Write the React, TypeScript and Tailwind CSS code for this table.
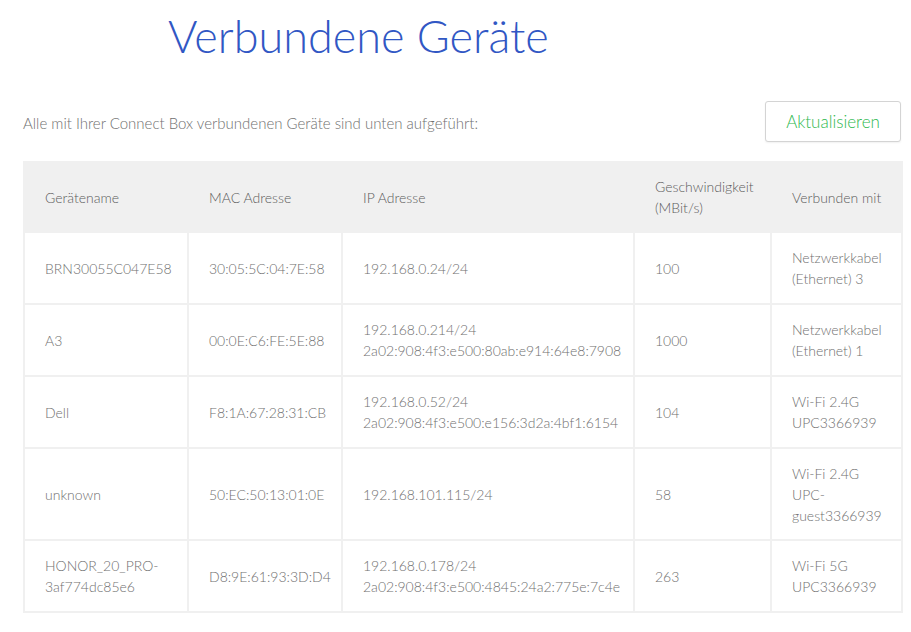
import React from "react";

const rows: { name: string[]; mac: string; ip: string[]; speed: string; via: string[] }[] = [
  { name: ["BRN30055C047E58"], mac: "30:05:5C:04:7E:58", ip: ["192.168.0.24/24"], speed: "100", via: ["Netzwerkkabel", "(Ethernet) 3"] },
  {
    name: ["A3"],
    mac: "00:0E:C6:FE:5E:88",
    ip: ["192.168.0.214/24", "2a02:908:4f3:e500:80ab:e914:64e8:7908"],
    speed: "1000",
    via: ["Netzwerkkabel", "(Ethernet) 1"],
  },
  {
    name: ["Dell"],
    mac: "F8:1A:67:28:31:CB",
    ip: ["192.168.0.52/24", "2a02:908:4f3:e500:e156:3d2a:4bf1:6154"],
    speed: "104",
    via: ["Wi-Fi 2.4G", "UPC3366939"],
  },
  { name: ["unknown"], mac: "50:EC:50:13:01:0E", ip: ["192.168.101.115/24"], speed: "58", via: ["Wi-Fi 2.4G", "UPC-", "guest3366939"] },
  {
    name: ["HONOR_20_PRO-", "3af774dc85e6"],
    mac: "D8:9E:61:93:3D:D4",
    ip: ["192.168.0.178/24", "2a02:908:4f3:e500:4845:24a2:775e:7c4e"],
    speed: "263",
    via: ["Wi-Fi 5G", "UPC3366939"],
  },
];

function Lines({ items }: { items: string[] }) {
  return (
    <>
      {items.map((t) => (
        <div key={t}>{t}</div>
      ))}
    </>
  );
}

export default function App() {
  const td = "bg-white pl-[20px] pr-2 py-[13.5px] align-middle";
  const th = "pl-[20px] font-light";
  return (
    <div className="min-h-screen bg-white font-['Lato',sans-serif] font-light text-[14px] leading-[21px] text-[#707070]">
      <h1 className="pl-[168px] pt-[9px] text-[45px] leading-[55px] font-light text-[#3157c4]">Verbundene Geräte</h1>

      <div className="mt-[37px] flex items-center justify-between pl-[23px] pr-[10px]">
        <p className="text-[15px] pt-[4px]">Alle mit Ihrer Connect Box verbundenen Geräte sind unten aufgeführt:</p>
        <button className="h-[41px] w-[136px] rounded-[3px] border border-[#d4d4d4] bg-white text-[17px] font-light text-[#2db84d] shadow-[0_1px_2px_rgba(0,0,0,0.06)]">
          Aktualisieren
        </button>
      </div>

      <div className="mt-[19px] pl-[23px]">
        <table className="w-[880px] table-fixed border-separate border-spacing-[2px] bg-[#f0f0f0]">
          <colgroup>
            <col className="w-[162px]" />
            <col className="w-[152px]" />
            <col className="w-[290px]" />
            <col className="w-[135px]" />
            <col className="w-[129px]" />
          </colgroup>
          <thead>
            <tr className="text-left text-[#5c5c5c]">
              <th className={`h-[68px] ${th}`}>Gerätename</th>
              <th className={th}>MAC Adresse</th>
              <th className={th}>IP Adresse</th>
              <th className={th}>
                Geschwindigkeit
                <br />
                (MBit/s)
              </th>
              <th className={th}>Verbunden mit</th>
            </tr>
          </thead>
          <tbody>
            {rows.map((r) => (
              <tr key={r.mac} className="h-[70px]">
                <td className={td}>
                  <Lines items={r.name} />
                </td>
                <td className={td}>{r.mac}</td>
                <td className={td}>
                  <Lines items={r.ip} />
                </td>
                <td className={td}>{r.speed}</td>
                <td className={td}>
                  <Lines items={r.via} />
                </td>
              </tr>
            ))}
          </tbody>
        </table>
      </div>
    </div>
  );
}
